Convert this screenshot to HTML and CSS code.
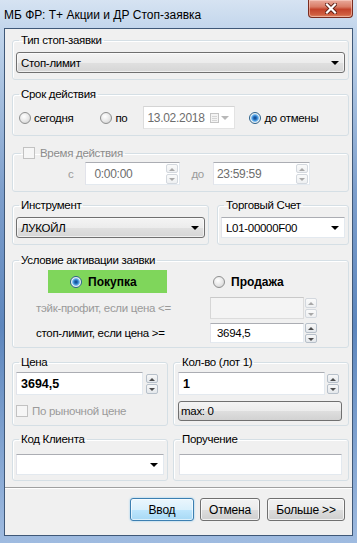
FILE: index.html
```html
<!DOCTYPE html>
<html lang="ru">

<head>
    <meta charset="UTF-8">
    <title>МБ ФР: Т+ Акции и ДР Стоп-заявка</title>
    <link rel="stylesheet" href="styles.css">
</head>

<body>
    <div class="window">
        <!-- Title bar -->
        <div class="titlebar">
            <span class="title">МБ ФР: Т+ Акции и ДР Стоп-заявка</span>
            <span class="close">
                <svg width="12" height="11" viewBox="0 0 12 11">
                    <path d="M2 1.5 L10 9.5 M10 1.5 L2 9.5" stroke="#5b1d12" stroke-width="4" stroke-linecap="square" />
                    <path d="M2 1.5 L10 9.5 M10 1.5 L2 9.5" stroke="#fff" stroke-width="2.2" stroke-linecap="square" />
                </svg>
            </span>
        </div>

        <div class="client">
            <fieldset class="group g-type">
                <legend>Тип стоп-заявки</legend>
                <div class="combo btnlike"><span>Стоп-лимит</span><i class="arrow"></i></div>
            </fieldset>

            <fieldset class="group g-term">
                <legend>Срок действия</legend>
                <div class="term-row">
                    <label class="radio-item r-today"><span class="radio"></span>сегодня</label>
                    <label class="radio-item r-to"><span class="radio"></span>по</label>
                    <div class="field date">
                        <span class="date-text">13.02.2018</span>
                        <svg class="cal" width="9" height="10" viewBox="0 0 9 10">
                            <rect x="0.5" y="0.5" width="8" height="9" fill="#f4f4f4" stroke="#c4c4c4" />
                            <path d="M2 3.5 H7 M2 5.5 H7 M2 7.5 H7" stroke="#d6d6d6" />
                        </svg>
                        <i class="arrow grey"></i>
                    </div>
                    <label class="radio-item r-cancel"><span class="radio checked"></span>до отмены</label>
                </div>
            </fieldset>

            <fieldset class="group g-time">
                <legend><span class="check"></span>Время действия</legend>
                <div class="time-row">
                    <span class="muted lbl-from">с</span>
                    <div class="field time t-from">
                        <span>0:00:00</span>
                        <div class="spin dim"><span class="up"></span><span class="down"></span></div>
                    </div>
                    <span class="muted lbl-to">до</span>
                    <div class="field time t-to">
                        <span>23:59:59</span>
                        <div class="spin dim"><span class="up"></span><span class="down"></span></div>
                    </div>
                </div>
            </fieldset>

            <div class="pair pair-instr">
                <fieldset class="group g-instr">
                    <legend>Инструмент</legend>
                    <div class="combo btnlike"><span>ЛУКОЙЛ</span><i class="arrow"></i></div>
                </fieldset>
                <fieldset class="group g-account">
                    <legend>Торговый Счет</legend>
                    <div class="combo white"><span>L01-00000F00</span><i class="arrow"></i></div>
                </fieldset>
            </div>

            <fieldset class="group g-cond">
                <legend>Условие активации заявки</legend>
                <div class="side-row">
                    <label class="side buy"><span class="radio checked"></span>Покупка</label>
                    <label class="side sell"><span class="radio"></span>Продажа</label>
                </div>
                <div class="price-row tp-row">
                    <span class="muted">тэйк-профит, если цена &lt;=</span>
                    <div class="field disabled"></div>
                    <div class="spin dim"><span class="up"></span><span class="down"></span></div>
                </div>
                <div class="price-row sl-row">
                    <span>стоп-лимит, если цена &gt;=</span>
                    <div class="field"><span>3694,5</span></div>
                    <div class="spin"><span class="up"></span><span class="down"></span></div>
                </div>
            </fieldset>

            <div class="pair pair-price">
                <fieldset class="group g-price">
                    <legend>Цена</legend>
                    <div class="num-row">
                        <div class="field big"><span>3694,5</span></div>
                        <div class="spin"><span class="up"></span><span class="down"></span></div>
                    </div>
                    <label class="market"><span class="check"></span>По рыночной цене</label>
                </fieldset>
                <fieldset class="group g-qty">
                    <legend>Кол-во (лот 1)</legend>
                    <div class="num-row">
                        <div class="field big"><span>1</span></div>
                        <div class="spin"><span class="up"></span><span class="down"></span></div>
                    </div>
                    <div class="max-btn">max: 0</div>
                </fieldset>
            </div>

            <div class="pair pair-client">
                <fieldset class="group g-code">
                    <legend>Код Клиента</legend>
                    <div class="combo white"><span></span><i class="arrow"></i></div>
                </fieldset>
                <fieldset class="group g-order">
                    <legend>Поручение</legend>
                    <div class="field order"></div>
                </fieldset>
            </div>

            <div class="separator"></div>

            <div class="buttons">
                <button class="btn default b-enter">Ввод</button>
                <button class="btn b-cancel">Отмена</button>
                <button class="btn b-more">Больше &gt;&gt;</button>
            </div>
        </div>
    </div>
</body>

</html>
```

FILE: styles.css
```css
/* Window frame */
body {
    margin: 0;
    font-family: "Liberation Sans", Arial, sans-serif;
    font-size: 11.5px;
    letter-spacing: -0.3px;
    color: #000;
}

.window {
    width: 357px;
    height: 543px;
    box-sizing: border-box;
    display: flex;
    flex-direction: column;
    padding: 0 4px 7px 4px;
    background: linear-gradient(180deg, #cfdef0 0%, #bcd1e9 8%, #7e9fcc 35%, #5d86bd 60%, #9fbbe0 100%);
}

.titlebar {
    height: 28px;
    display: flex;
    justify-content: space-between;
    align-items: flex-start;
    margin: 0 -4px;
    padding: 0 4px;
    background: linear-gradient(180deg, #d6e3f2, #c3d6ec);
}

.title {
    font-size: 12px;
    letter-spacing: 0;
    line-height: 15px;
    margin-top: 8px;
    color: #000;
}

.close {
    width: 45px;
    height: 18px;
    box-sizing: border-box;
    border: 1px solid #7a2c1f;
    border-top: none;
    border-radius: 0 0 4px 4px;
    background: linear-gradient(180deg, #e9aa9c 0%, #d97c66 40%, #c3432b 55%, #cf5e40 85%, #e08a66 100%);
    box-shadow: inset 0 0 0 1px rgba(255, 220, 210, 0.5);
    display: flex;
    align-items: center;
    justify-content: center;
}

.client {
    flex: 1;
    display: flex;
    flex-direction: column;
    border: 1px solid #3f5878;
    background: #f0f0f0;
    padding: 0 3px 10px 7px;
}

/* Group boxes */
.group {
    margin: 0;
    min-width: 0;
    border: 1px solid #d5dfe5;
    border-radius: 3px;
    padding: 5px 3px 6px 3px;
    box-shadow: inset 1px 1px 0 #fff;
}

.group legend {
    margin-left: 3px;
    padding: 0 2px;
    line-height: 14px;
    height: 14px;
}

.g-type { margin-top: 4px; }
.g-term { margin-top: 7px; }
.g-time { margin-top: 10px; padding-top: 2px; }
.pair-instr { margin-top: 6px; }
.g-cond { margin-top: 8px; padding-top: 3px; padding-bottom: 4px; }
.pair-price { margin-top: 7px; }
.pair-client { margin-top: 6px; }

.pair {
    display: flex;
}

.g-instr { width: 197px; box-sizing: border-box; }
.g-account { flex: 1; margin-left: 8px; }
.g-price, .g-code { width: 156px; box-sizing: border-box; }
.g-qty, .g-order { flex: 1; margin-left: 5px; }
.g-price, .g-qty { padding-top: 3px; padding-bottom: 4px; }
.g-code, .g-order { padding-top: 8px; padding-bottom: 5px; }

/* Inputs */
.field {
    box-sizing: border-box;
    height: 22px;
    display: flex;
    align-items: center;
    padding-left: 6px;
    background: #fff;
    border: 1px solid;
    border-color: #abadb3 #e3e9ef #e3e9ef #e2e3ea;
}

.field.disabled {
    background: #f4f4f4;
    border-color: #c9c9c9 #dcdcdc #dcdcdc #d6d6d6;
}

.combo {
    position: relative;
    box-sizing: border-box;
    height: 21px;
    display: flex;
    align-items: center;
    padding-left: 4px;
}

.combo.btnlike {
    border: 1px solid #707070;
    border-radius: 3px;
    background: linear-gradient(180deg, #f4f4f4 0%, #ececec 50%, #e0e0e0 51%, #d6d6d6 100%);
    box-shadow: inset 0 0 0 1px rgba(255, 255, 255, 0.6);
}

.combo.white {
    background: #fff;
    border: 1px solid;
    border-color: #abadb3 #e3e9ef #e3e9ef #e2e3ea;
}

.arrow {
    position: absolute;
    right: 5px;
    top: 8px;
    width: 0;
    height: 0;
    border-left: 4px solid transparent;
    border-right: 4px solid transparent;
    border-top: 4px solid #000;
}

.arrow.grey {
    position: static;
    border-top-color: #b8b8b8;
    margin-left: 2px;
}

/* Spinners */
.spin {
    width: 12px;
    height: 20px;
    display: flex;
    flex-direction: column;
    gap: 1px;
    flex-shrink: 0;
}

.spin span {
    flex: 1;
    position: relative;
    border: 1px solid #b7c0ca;
    border-radius: 2px;
    background: linear-gradient(180deg, #f7f7f7, #e4e8ec);
}

.spin span::after {
    content: "";
    position: absolute;
    left: 2px;
    top: 3px;
    border-left: 3px solid transparent;
    border-right: 3px solid transparent;
}

.spin .up::after { border-bottom: 3px solid #4d4d4d; }
.spin .down::after { border-top: 3px solid #4d4d4d; }

.spin.dim span { border-color: #d3d8de; background: linear-gradient(180deg, #fafafa, #eef0f2); }
.spin.dim .up::after { border-bottom-color: #a8a8a8; }
.spin.dim .down::after { border-top-color: #a8a8a8; }

/* Radios and checkboxes */
.radio {
    width: 12px;
    height: 12px;
    box-sizing: border-box;
    border-radius: 50%;
    border: 1px solid #8e8f8f;
    background: radial-gradient(circle at 40% 35%, #ffffff 0, #e6e6e6 55%, #c9c9c9 100%);
    flex-shrink: 0;
}

.radio.checked {
    border-color: #2c628b;
    background: radial-gradient(circle, #0f3f7e 0, #2a78c8 2px, #7cc0f2 3.5px, #e9eef3 4.3px, #f5f5f5 6px);
}

.check {
    width: 12px;
    height: 12px;
    box-sizing: border-box;
    border: 1px solid #c2c2c2;
    background: #f6f6f6;
    flex-shrink: 0;
}

.muted { color: #9a9a9a; }

/* Срок действия */
.term-row {
    display: flex;
    align-items: center;
    height: 23px;
}

.radio-item {
    display: flex;
    align-items: center;
    gap: 3px;
}

.r-today { margin-left: 3px; }
.r-to { margin-left: 27px; }
.r-cancel { margin-left: 14px; }

.date {
    margin-left: 16px;
    width: 92px;
    height: 23px;
    padding-left: 3px;
    border-color: #d4d4d4 #e3e3e3 #e3e3e3 #dcdcdc;
    color: #6d6d6d;
    font-size: 12px;
}

.date-text { width: 63px; }

/* Время действия */
.g-time legend {
    display: flex;
    align-items: center;
    gap: 5px;
    color: #8c8c8c;
    margin-left: 5px;
}

.time-row {
    display: flex;
    align-items: center;
}

.lbl-from { margin-left: 52px; }

.time {
    height: 23px;
    padding-left: 8px;
    padding-right: 1px;
    justify-content: space-between;
    color: #6d6d6d;
    font-size: 12px;
}

.t-from { width: 95px; margin-left: 12px; }
.lbl-to { margin-left: 11px; }
.t-to { width: 97px; margin-left: 9px; padding-left: 3px; }

/* Условие активации */
.side-row {
    display: flex;
    align-items: center;
    height: 23px;
    padding-left: 32px;
    font-weight: bold;
    font-size: 12px;
    letter-spacing: 0;
}

.side {
    display: flex;
    align-items: center;
    gap: 6px;
    height: 23px;
}

.buy {
    width: 119px;
    box-sizing: border-box;
    padding-left: 22px;
    background: #7fd65b;
}

.sell { margin-left: 46px; }

.price-row {
    display: grid;
    grid-template-columns: 173px 94px 12px;
    column-gap: 1px;
    align-items: center;
    padding-left: 20px;
}

.tp-row { margin-top: 4px; }
.tp-row .field { height: 22px; }
.sl-row { margin-top: 4px; }
.sl-row .field { height: 20px; padding-left: 6px; }

/* Цена / Кол-во */
.num-row {
    display: flex;
    align-items: center;
    gap: 3px;
}

.field.big {
    height: 23px;
    font-weight: bold;
    font-size: 12.5px;
    letter-spacing: 0;
    padding-left: 4px;
    flex: 1;
}

.g-price .num-row { width: 142px; }
.g-qty .num-row { margin-left: 1px; width: 161px; gap: 2px; }

.market {
    display: flex;
    align-items: center;
    gap: 4px;
    margin-top: 10px;
    color: #9a9a9a;
}

.max-btn {
    box-sizing: border-box;
    margin: 6px 3px 0 1px;
    height: 20px;
    padding-left: 2px;
    display: flex;
    align-items: center;
    border: 1px solid #707070;
    border-radius: 3px;
    background: linear-gradient(180deg, #f4f4f4 0%, #ececec 50%, #dedede 51%, #d2d2d2 100%);
}

.field.order {
    height: 21px;
    margin: 0 3px 0 2px;
}

/* Bottom buttons */
.separator {
    margin: 6px -3px 0 -7px;
    border-top: 1px solid #a0a0a0;
    border-bottom: 1px solid #fff;
    height: 0;
}

.buttons {
    display: flex;
    justify-content: flex-end;
    margin-top: 9px;
    margin-right: 4px;
}

.btn {
    height: 23px;
    box-sizing: border-box;
    font-family: inherit;
    font-size: 12px;
    letter-spacing: -0.2px;
    color: #000;
    padding: 0;
    border: 1px solid #707070;
    border-radius: 3px;
    background: linear-gradient(180deg, #f2f2f2 0%, #ebebeb 50%, #dddddd 51%, #cfcfcf 100%);
    box-shadow: inset 0 0 0 1px rgba(255, 255, 255, 0.7);
}

.btn.default {
    border-color: #3c7fb1;
    background: linear-gradient(180deg, #eaf6fd 0%, #d9f0fc 50%, #bee6fd 51%, #a7d9f5 100%);
    box-shadow: inset 0 0 0 1px rgba(255, 255, 255, 0.6), 0 0 2px #7ec4f0;
}

.b-enter { width: 64px; }
.b-cancel { width: 60px; margin-left: 6px; }
.b-more { width: 78px; margin-left: 7px; }
```
